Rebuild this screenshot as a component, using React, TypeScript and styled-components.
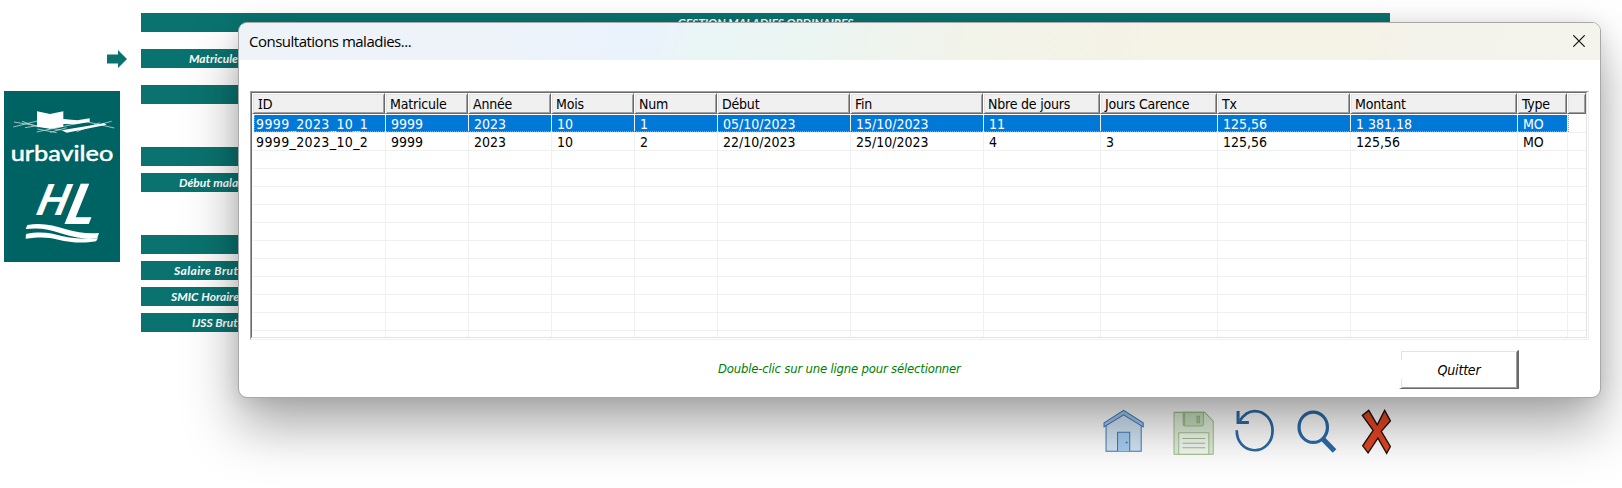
import React from "react";
import styled, { createGlobalStyle, css } from "styled-components";

const GlobalStyle = createGlobalStyle`
  html, body { margin: 0; padding: 0; background: #fff; overflow: hidden; }
  * { box-sizing: border-box; }
`;

const UI = `"DejaVu Sans Condensed", "DejaVu Sans", sans-serif`;
const TEAL = "#0a736f";

const Page = styled.div`
  position: relative;
  width: 1622px;
  height: 488px;
  overflow: hidden;
  background: #fff;
  display: flex;
`;

const Sidebar = styled.div`
  width: 141px;
  flex: none;
  display: flex;
  flex-direction: column;
`;

const Arrow = styled.svg`
  display: block;
  margin: 50px 0 0 107px;
`;

const Logo = styled.svg`
  display: block;
  margin: 23px 0 0 4px;
`;

const Sheet = styled.div`
  width: 1249px;
  flex: none;
  padding-top: 13px;
  display: flex;
  flex-direction: column;
`;

const Bar = styled.div<{ $gap?: number; $indent?: number; $spacing?: number }>`
  height: 19px;
  flex: none;
  margin-top: ${(p) => p.$gap ?? 0}px;
  padding-left: ${(p) => p.$indent ?? 0}px;
  width: ${(p) => (p.$indent ? "240px" : "100%")};
  text-align: ${(p) => (p.$indent ? "left" : "center")};
  background: ${TEAL};
  color: #fff;
  font: italic 700 12px/20px Lato, sans-serif;
  letter-spacing: ${(p) => p.$spacing ?? 0}px;
  white-space: nowrap;
  overflow: hidden;
`;

const Tools = styled.div`
  display: flex;
  margin: 77px 0 0 962.3px;
`;

const Tool = styled.svg<{ $gap?: number }>`
  display: block;
  flex: none;
  margin-left: ${(p) => p.$gap ?? 0}px;
`;

const Dialog = styled.div`
  position: absolute;
  left: 238px;
  top: 22px;
  width: 1363px;
  height: 376px;
  border: 1px solid #a6a8aa;
  border-radius: 9px;
  background: #fff;
  background-clip: padding-box;
  box-shadow: 0 28px 54px rgba(0, 0, 0, 0.34), 0 2px 20px rgba(0, 0, 0, 0.1);
  display: flex;
  flex-direction: column;
`;

const TitleBar = styled.div`
  height: 37px;
  flex: none;
  padding: 0 15px 2px 10px;
  border-radius: 8px 8px 0 0;
  background: linear-gradient(105deg, #eef3f8 0%, #edf3fa 22%, #eaf2fc 30%, #eaf5f7 33%, #ebf5f2 42%, #f2f3e9 54%, #f5f2e6 68%, #f5f2e6 82%, #f3f3ec 88%, #f4f3ec 100%);
  display: flex;
  align-items: center;
  justify-content: space-between;
`;

const Title = styled.span`
  font: 15px/20px "Open Sans", "Noto Sans", sans-serif;
  letter-spacing: -0.5px;
  color: #000;
`;

const ListView = styled.div`
  margin: 31px 0 0 11px;
  width: 1339px;
  height: 249px;
  flex: none;
  border: 1px solid;
  border-color: #a0a0a0 #f0f0f0 #f0f0f0 #a0a0a0;
  padding: 0 1px 1px 0;
`;

const ListInner = styled.div`
  height: 246px;
  border: 1px solid;
  border-color: #696969 #e3e3e3 #e3e3e3 #696969;
  overflow: hidden;
`;

const HeaderRow = styled.div`
  display: flex;
  height: 22px;
`;

const HeaderCell = styled.div<{ $w?: number; $serifI?: boolean }>`
  width: ${(p) => (p.$w ? `${p.$w}px` : "auto")};
  flex: ${(p) => (p.$w ? "none" : "1")};
  height: 21px;
  padding-left: ${(p) => (p.$serifI ? 5 : 4)}px;
  border: 1px solid;
  border-color: #fff #696969 #696969 #fff;
  box-shadow: inset 1px 1px #e3e3e3, inset -1px -1px #a0a0a0;
  background: #f0f0f0;
  color: #000;
  font: 14px/20px ${(p) => (p.$serifI ? `"Noto Sans", sans-serif` : UI)};
  letter-spacing: -0.2px;
  white-space: nowrap;
`;

const focusRect = css`
  position: relative;
  &::after {
    content: "";
    position: absolute;
    left: 2px;
    top: 0;
    bottom: 1px;
    width: 1313px;
    border: 1px dotted #ff8728;
    border-top: none;
  }
`;

const Row = styled.div<{ $selected?: boolean }>`
  display: flex;
  height: 18px;
  color: ${(p) => (p.$selected ? "#fff" : "#000")};
  ${(p) => p.$selected && focusRect}
`;

const Cell = styled.div<{ $w?: number; $selected?: boolean; $first?: boolean }>`
  width: ${(p) => (p.$w ? `${p.$w}px` : "auto")};
  flex: ${(p) => (p.$w ? "none" : "1")};
  padding-left: ${(p) => (p.$first ? 2 : 5)}px;
  border-left: ${(p) => (p.$first ? "2px solid #fff" : "none")};
  border-right: ${(p) => (p.$w ? "1px solid #f0f0f0" : "none")};
  border-bottom: 1px solid #f0f0f0;
  background: ${(p) => (p.$selected ? "#0078d7" : "#fff")};
  font: 14px/18px ${UI};
  letter-spacing: ${(p) => (p.$first ? 0.37 : 0)}px;
  white-space: nowrap;
`;

const Footer = styled.div`
  display: flex;
  padding-top: 10px;
`;

const Hint = styled.span`
  width: 300px;
  margin: 9px 0 0 479px;
  font: italic 13px/20px ${UI};
  letter-spacing: -0.2px;
  color: #008000;
  white-space: nowrap;
`;

const Quit = styled.button`
  position: relative;
  margin: 0 0 0 381px;
  width: 120px;
  height: 39px;
  padding: 0;
  border: solid;
  border-width: 1px 2px 1px 2px;
  border-color: #fff #696969 #696969 #fff;
  box-shadow: inset 1px 1px #e3e3e3, inset -1px -1px #a0a0a0;
  background: #fff;
  font: italic 14px/18px ${UI};
  letter-spacing: -0.2px;
  color: #000;

  &::before {
    content: "";
    position: absolute;
    left: 0;
    top: 9px;
    width: 1px;
    height: 19px;
    background: #fff;
  }
`;

const COLS: [string, number][] = [
  ["ID", 133], ["Matricule", 83], ["Année", 83], ["Mois", 83], ["Num", 83],
  ["Début", 133], ["Fin", 133], ["Nbre de jours", 117], ["Jours Carence", 117],
  ["Tx", 133], ["Montant", 167], ["Type", 50],
];

const DATA = [
  ["9999_2023_10_1", "9999", "2023", "10", "1", "05/10/2023", "15/10/2023", "11", "", "125,56", "1 381,18", "MO"],
  ["9999_2023_10_2", "9999", "2023", "10", "2", "22/10/2023", "25/10/2023", "4", "3", "125,56", "125,56", "MO"],
];

const ROWS = Array.from({ length: 13 }, (_, i) => DATA[i] ?? COLS.map(() => ""));

function Brand() {
  return (
    <Logo width="116" height="171" viewBox="12 33 348 513">
      <rect x="12" y="33" width="348" height="513" fill="#006363" />
      <g stroke="#b9d4d2" strokeWidth="2.5" fill="none">
        <path d="M42 126 L185 150 M40 141 L120 121 M75 143 L190 124 M66 124 L116 141 M110 156 L262 124 M112 147 L170 158 M255 124 L343 144 M262 143 L335 124 M230 155 L300 128 M150 157 L200 143" />
      </g>
      <path d="M111 94 L150 102 L190 94 V140 L150 146 L111 140Z M190 117 L232 121 L269 115 V126 L226 133 L190 132Z M185 151 L312 130 L320 134 L200 158Z" fill="#fff" />
      <text x="32" y="243" textLength="308" lengthAdjust="spacingAndGlyphs" fontFamily="Lato, sans-serif" fontSize="66" fill="#fff" stroke="#fff" strokeWidth="1.5">urbavileo</text>
      <g fill="#fff" fontFamily="Lato, sans-serif" fontWeight="900">
        <text transform="translate(99 405) skewX(-22)" fontSize="128" textLength="92" lengthAdjust="spacingAndGlyphs">H</text>
        <text transform="translate(181 433) skewX(-22)" fontSize="166" textLength="88" lengthAdjust="spacingAndGlyphs">L</text>
      </g>
      <path d="M82 435 C125 427 160 436 198 448 C235 459 262 461 297 459 L292 474 C245 479 216 470 182 460 C145 448 120 442 77 447Z M78 462 C125 453 155 460 185 468 C222 477 255 476 294 475 L288 484 C245 491 210 487 175 479 C145 471 120 470 77 476Z" fill="#fff" />
    </Logo>
  );
}

function Toolbar() {
  return (
    <Tools>
      <Tool width="41.6" height="46.65" viewBox="69 234 123 138">
        <path d="M78 282 L130 247 L182 282 V359 H78Z" fill="#d4e5f5" stroke="#3d7dbd" strokeWidth="3" />
        <path d="M72 275 L130 238 L188 275 V287 L130 251 L72 287Z" fill="#a3c8ec" stroke="#3d7dbd" strokeWidth="3" />
        <path d="M112 359 V303 H148 V359" fill="#a9cef0" stroke="#3d7dbd" strokeWidth="3" />
        <circle cx="139" cy="333" r="3" fill="#3d7dbd" />
      </Tool>
      <Tool $gap={28.4} width="41.6" height="46.65" viewBox="276 234 123 138">
        <path d="M279 244 H370 L395 270 V368 H279Z" fill="#dfeed9" stroke="#9fc08c" strokeWidth="3" />
        <path d="M306 244 V278 Q306 284 312 284 H360 Q366 284 366 278 V244Z" fill="#c8dfbd" stroke="#9fc08c" strokeWidth="3" />
        <rect x="306" y="244" width="6" height="39" fill="#9fc08c" />
        <rect x="347" y="255" width="7" height="20" fill="#b0cc9f" stroke="#86aa70" strokeWidth="2" />
        <path d="M293 368 V304 H382 V368Z" fill="#f4f9f2" stroke="#9fc08c" strokeWidth="3" />
        <path d="M304 321 H371 M304 335 H371 M304 349 H371" stroke="#9fc08c" strokeWidth="3" />
      </Tool>
      <Tool $gap={19.3} width="41.6" height="46.65" viewBox="456 234 123 138">
        <path d="M464 297 C464 332 487 356 517 356 C547 356 570 331 570 298 C570 265 547 240 517 240 C500 240 486 249 473 269" fill="none" stroke="#2b6ca8" strokeWidth="8" />
        <path d="M468 240 V274 H500" fill="none" stroke="#2b6ca8" strokeWidth="9" />
      </Tool>
      <Tool $gap={20.2} width="41.6" height="46.65" viewBox="639 234 123 138">
        <ellipse cx="690" cy="288" rx="42" ry="45" fill="none" stroke="#2b6ca8" strokeWidth="9.5" />
        <path d="M718 322 L753 358" stroke="#2b6ca8" strokeWidth="15" />
      </Tool>
      <Tool $gap={23.3} width="30.4" height="46.65" viewBox="831 234 90 138">
        <path d="M854 238 L835 253 L867 297 L836 343 L852 364 L881 320 L907 365 L918 345 L891 300 L918 269 L901 238 L879 281Z" fill="#e64524" stroke="#1a120e" strokeWidth="4" />
      </Tool>
    </Tools>
  );
}

export default function App() {
  return (
    <Page>
      <GlobalStyle />
      <Sidebar>
        <Arrow width="20" height="18" viewBox="0 0 20 18">
          <path d="M0 4.5 H11 V0 L20 9 L11 18 V13.5 H0Z" fill={TEAL} />
        </Arrow>
        <Brand />
      </Sidebar>
      <Sheet>
        <Bar $spacing={-0.08}>GESTION MALADIES ORDINAIRES</Bar>
        <Bar $gap={17} $indent={48}>Matricule</Bar>
        <Bar $gap={17} />
        <Bar $gap={43} />
        <Bar $gap={7} $indent={38}>Début maladie</Bar>
        <Bar $gap={43} />
        <Bar $gap={7} $indent={33} $spacing={0.4}>Salaire Brut</Bar>
        <Bar $gap={7} $indent={30}>SMIC Horaire</Bar>
        <Bar $gap={7} $indent={51}>IJSS Brut</Bar>
        <Toolbar />
      </Sheet>
      <Dialog>
        <TitleBar>
          <Title>Consultations maladies...</Title>
          <svg width="12" height="12" viewBox="0 0 12 12">
            <path d="M0.3 0.3 L11.7 11.7 M11.7 0.3 L0.3 11.7" stroke="#111" strokeWidth="1.2" />
          </svg>
        </TitleBar>
        <ListView>
          <ListInner>
            <HeaderRow>
              {COLS.map(([name, w], i) => (
                <HeaderCell key={name} $w={w} $serifI={i === 0}>{name}</HeaderCell>
              ))}
              <HeaderCell />
            </HeaderRow>
            {ROWS.map((row, r) => (
              <Row key={r} $selected={r === 0}>
                {row.map((v, c) => (
                  <Cell key={c} $w={c === 0 ? COLS[c][1] + 1 : COLS[c][1]} $first={c === 0} $selected={r === 0}>{v}</Cell>
                ))}
                <Cell />
              </Row>
            ))}
          </ListInner>
        </ListView>
        <Footer>
          <Hint>Double-clic sur une ligne pour sélectionner</Hint>
          <Quit>Quitter</Quit>
        </Footer>
      </Dialog>
    </Page>
  );
}
